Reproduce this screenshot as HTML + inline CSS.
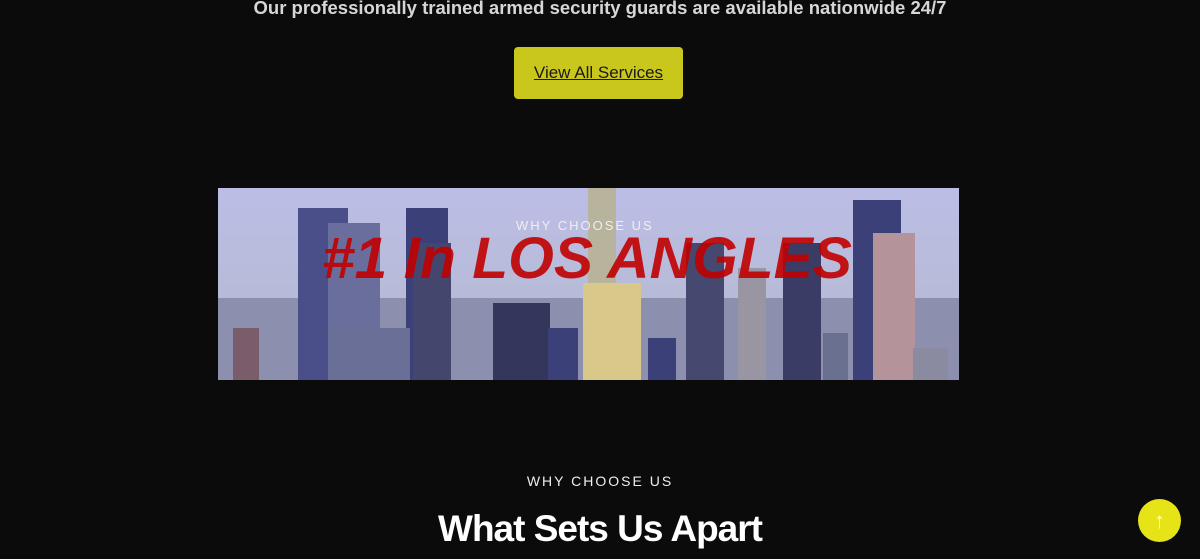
<!DOCTYPE html>
<html><head><style>
body{margin:0;width:1200px;height:559px;background:#0c0b0c;overflow:hidden;font-family:"Liberation Sans",sans-serif;position:relative}
.t{position:absolute;left:0;width:1200px;text-align:center}
</style></head><body>
<div class="t" style="top:-3px;font-size:18.5px;font-weight:bold;color:#d6d6d6">Our professionally trained armed security guards are available nationwide 24/7</div>
<div style="position:absolute;left:514px;top:47px;width:169px;height:52px;background:#c9c61c;border-radius:4px;text-align:center;line-height:52px;font-size:17px;color:#1a1a1a;text-decoration:underline">View All Services</div>
<svg style="position:absolute;left:218px;top:188px" width="741" height="192">
<defs><linearGradient id="s" x1="0" y1="0" x2="0" y2="1"><stop offset="0" stop-color="#bcbde6"/><stop offset=".6" stop-color="#b7bbd6"/><stop offset="1" stop-color="#a9a8b8"/></linearGradient></defs>
<rect width="741" height="192" fill="url(#s)"/>
<rect y="110" width="741" height="82" fill="#8d8fae"/>
<g fill="#3b4079">
<rect x="80" y="20" width="50" height="172" fill="#4a4f8a"/>
<rect x="110" y="35" width="52" height="157" fill="#6a6e9c"/>
<rect x="188" y="20" width="42" height="172"/>
<rect x="195" y="55" width="38" height="137" fill="#45466d"/>
<rect x="110" y="140" width="82" height="52" fill="#6a6f98"/>
<rect x="15" y="140" width="26" height="52" fill="#7a5c6a"/>
<rect x="275" y="115" width="57" height="77" fill="#35365c"/>
<rect x="370" y="0" width="28" height="100" fill="#b8b39d"/>
<rect x="365" y="95" width="58" height="97" fill="#d8c88a"/>
<rect x="330" y="140" width="30" height="52"/>
<rect x="430" y="150" width="28" height="42"/>
<rect x="468" y="55" width="38" height="137" fill="#45486f"/>
<rect x="520" y="80" width="28" height="112" fill="#9a95a3"/>
<rect x="565" y="55" width="38" height="137" fill="#3a3c66"/>
<rect x="605" y="145" width="25" height="47" fill="#6a7090"/>
<rect x="635" y="12" width="48" height="180" fill="#3b4178"/>
<rect x="655" y="45" width="42" height="147" fill="#b4939a"/>
<rect x="695" y="160" width="35" height="32" fill="#8a8aa0"/>
</g>
<text x="298" y="42" fill="#eee" font-size="13" letter-spacing="2" font-family="Liberation Sans">WHY CHOOSE US</text>
<text x="104" y="90" fill="#c00000" fill-opacity=".9" font-size="58" font-weight="bold" font-style="italic" font-family="Liberation Sans" textLength="530" lengthAdjust="spacingAndGlyphs">#1 In LOS ANGLES</text>
</svg>
<div class="t" style="top:473px;font-size:14px;letter-spacing:2px;color:#eee">WHY CHOOSE US</div>
<div class="t" style="top:508px;font-size:37px;font-weight:bold;color:#fff;letter-spacing:-1px">What Sets Us Apart</div>
<div style="position:absolute;left:1138px;top:499px;width:43px;height:43px;border-radius:50%;background:#e6e316;color:#fff;text-align:center;line-height:43px;font-size:22px">↑</div>
</body></html>
